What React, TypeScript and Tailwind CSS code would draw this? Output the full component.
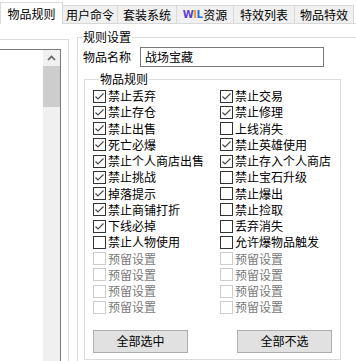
import React from "react";

type Item = [string, boolean, boolean?];

const leftItems: Item[] = [
  ["禁止丢弃", true],
  ["禁止存仓", true],
  ["禁止出售", true],
  ["死亡必爆", true],
  ["禁止个人商店出售", true],
  ["禁止挑战", true],
  ["掉落提示", true],
  ["禁止商铺打折", true],
  ["下线必掉", true],
  ["禁止人物使用", false],
  ["预留设置", false, true],
  ["预留设置", false, true],
  ["预留设置", false, true],
  ["预留设置", false, true],
];

const rightItems: Item[] = [
  ["禁止交易", true],
  ["禁止修理", true],
  ["上线消失", false],
  ["禁止英雄使用", true],
  ["禁止存入个人商店", true],
  ["禁止宝石升级", false],
  ["禁止爆出", false],
  ["禁止捡取", false],
  ["丢弃消失", false],
  ["允许爆物品触发", false],
  ["预留设置", false, true],
  ["预留设置", false, true],
  ["预留设置", false, true],
  ["预留设置", false, true],
];

function CheckBox({ checked, disabled }: { checked: boolean; disabled?: boolean }) {
  return (
    <div
      className={`w-[13px] h-[13px] shrink-0 border bg-white flex items-center justify-center ${
        disabled ? "border-[#cccccc]" : "border-[#333333]"
      }`}
    >
      {checked && (
        <svg width="11" height="11" viewBox="0 0 11 11">
          <path d="M1.5 5.5 L4 8 L9.5 2.5" fill="none" stroke="#444444" strokeWidth="1.1" />
        </svg>
      )}
    </div>
  );
}

function Row({ item }: { item: Item }) {
  const [label, checked, disabled] = item;
  return (
    <div className="flex items-center gap-[2px]">
      <CheckBox checked={checked} disabled={disabled} />
      <span className={`leading-[14px] ${disabled ? "text-[#7a7a7a]" : "text-black"}`}>{label}</span>
    </div>
  );
}

const tabs = ["物品规则", "用户命令", "套装系统", "WIL资源", "特效列表", "物品特效"];
const tabWidths = ["w-[63px]", "w-[56px]", "w-[60px]", "w-[58px]", "w-[62px]", "w-[60px]"];

export default function App() {
  const cells: Item[] = [];
  leftItems.forEach((l, i) => {
    cells.push(l);
    cells.push(rightItems[i]);
  });
  return (
    <div
      className="w-[356px] h-[361px] overflow-hidden bg-white text-[12px] text-black"
      style={{ fontFamily: '"Noto Sans CJK SC", "Noto Sans", sans-serif' }}
    >
      {/* Tab strip */}
      <div className="flex items-end h-[24px] border-b border-[#d9d9d9]">
        {tabs.map((t, i) =>
          i === 0 ? (
            <div
              key={t}
              className={`${tabWidths[i]} h-[22px] -mb-[1px] bg-white border border-b-0 border-[#d9d9d9] flex items-center justify-center shrink-0 relative z-10 leading-[14px]`}
            >
              {t}
            </div>
          ) : (
            <div
              key={t}
              className={`${tabWidths[i]} h-[18px] bg-[#f0f0f0] border border-b-0 border-[#d9d9d9] -ml-[1px] flex items-center justify-center shrink-0 leading-[14px]`}
            >
              {t === "WIL资源" ? (
                <span className="flex items-center">
                  <span className="font-bold text-[10px] tracking-[-0.5px] mr-[1px]" style={{ fontFamily: '"DejaVu Sans", sans-serif' }}>
                    <span className="text-[#5a3fd0]">W</span>
                    <span className="text-[#e09a20]">I</span>
                    <span className="text-[#2f6ad8]">L</span>
                  </span>
                  资源
                </span>
              ) : (
                t
              )}
            </div>
          )
        )}
      </div>

      {/* Body */}
      <div className="flex">
        {/* Left list area */}
        <div className="w-[77px] shrink-0">
          <div className="mt-[15px] w-[69px] h-[330px] border-t border-r border-[#dcdcdc]">
            <div className="mt-[9px] w-[61px] h-[320px] border-t border-r border-[#7a7a7a] flex justify-end">
              <div className="w-[17px] h-full bg-[#f0f0f0] flex flex-col">
                <div className="h-[16px] flex items-center justify-center">
                  <svg width="9" height="6" viewBox="0 0 9 6">
                    <path d="M1 5 L4.5 1.5 L8 5" fill="none" stroke="#606060" strokeWidth="1.6" />
                  </svg>
                </div>
                <div className="h-[41px] bg-[#cdcdcd]" />
              </div>
            </div>
          </div>
        </div>

        {/* 规则设置 group */}
        <fieldset className="mt-[6px] w-[300px] h-[340px] border border-[#dcdcdc] shrink-0">
          <legend className="ml-[4px] px-[1px] leading-[14px]">规则设置</legend>
          <div className="flex items-center mt-[3px] pl-[5px]">
            <span className="w-[57px] leading-[14px]">物品名称</span>
            <div className="w-[184px] h-[20px] border border-[#7a7a7a] flex items-center px-[4px] leading-[14px]">
              战场宝藏
            </div>
          </div>

          {/* 物品规则 group */}
          <fieldset className="ml-[6px] mt-[5px] w-[257px] border border-[#dcdcdc] pl-[8px] pb-[6px]">
            <legend className="ml-[6px] px-[1px] leading-[14px]">物品规则</legend>
            <div className="grid grid-cols-[127px_1fr] auto-rows-[16.25px] mt-[2px]">
              {cells.map((c, i) => (
                <Row key={i} item={c} />
              ))}
            </div>
            <div className="flex gap-[49px] mt-[14px]">
              <button className="w-[95px] h-[23px] bg-[#e1e1e1] border border-[#adadad] leading-[14px]">
                全部选中
              </button>
              <button className="w-[95px] h-[23px] bg-[#e1e1e1] border border-[#adadad] leading-[14px]">
                全部不选
              </button>
            </div>
          </fieldset>
        </fieldset>
      </div>
    </div>
  );
}
